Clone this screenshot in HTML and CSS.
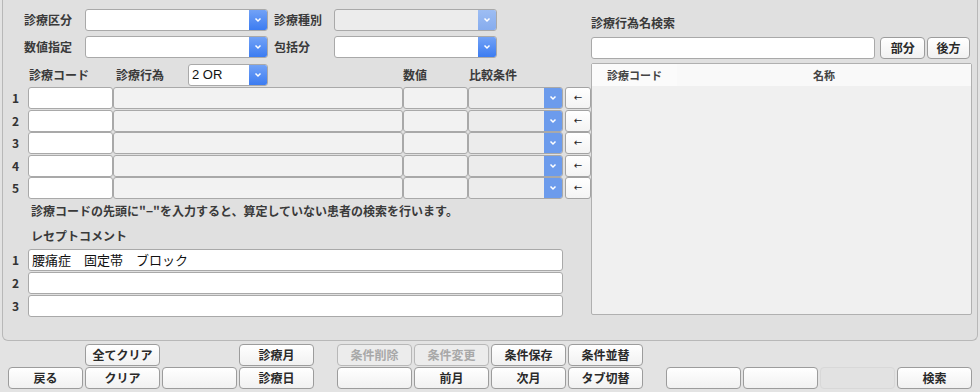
FILE: index.html
```html
<!DOCTYPE html>
<html lang="ja">
<head>
  <meta charset="UTF-8">
  <title>診療行為検索</title>
  <link rel="stylesheet" href="styles.css">
</head>
<body>
  <div class="panel">
    <div class="left">
      <div class="top-row">
        <label class="lbl lbl-a">診療区分</label>
        <div class="select sel-a"><span class="sel-text"></span><span class="sel-btn"><svg width="8" height="6" viewBox="0 0 8 6"><polyline points="1.5,1.5 4,4 6.5,1.5" fill="none" stroke="#fff" stroke-width="1.5"/></svg></span></div>
        <label class="lbl lbl-b">診療種別</label>
        <div class="select sel-b disabled"><span class="sel-text"></span><span class="sel-btn"><svg width="8" height="6" viewBox="0 0 8 6"><polyline points="1.5,1.5 4,4 6.5,1.5" fill="none" stroke="#fff" stroke-width="1.5"/></svg></span></div>
      </div>
      <div class="top-row">
        <label class="lbl lbl-a">数値指定</label>
        <div class="select sel-a"><span class="sel-text"></span><span class="sel-btn"><svg width="8" height="6" viewBox="0 0 8 6"><polyline points="1.5,1.5 4,4 6.5,1.5" fill="none" stroke="#fff" stroke-width="1.5"/></svg></span></div>
        <label class="lbl lbl-b">包括分</label>
        <div class="select sel-b"><span class="sel-text"></span><span class="sel-btn"><svg width="8" height="6" viewBox="0 0 8 6"><polyline points="1.5,1.5 4,4 6.5,1.5" fill="none" stroke="#fff" stroke-width="1.5"/></svg></span></div>
      </div>

      <div class="grid-head">
        <span></span>
        <span class="lbl head-code">診療コード</span>
        <div class="head-act">
          <span class="lbl">診療行為</span>
          <div class="select sel-or"><span class="sel-text">2 OR</span><span class="sel-btn"><svg width="8" height="6" viewBox="0 0 8 6"><polyline points="1.5,1.5 4,4 6.5,1.5" fill="none" stroke="#fff" stroke-width="1.5"/></svg></span></div>
        </div>
        <span class="lbl">数値</span>
        <span class="lbl">比較条件</span>
      </div>

      <div class="code-rows">
        <div class="code-row">
          <span class="num">1</span>
          <div class="field white"></div>
          <div class="field"></div>
          <div class="field"></div>
          <div class="select cmp"><span class="sel-text"></span><span class="sel-btn"><svg width="8" height="6" viewBox="0 0 8 6"><polyline points="1.5,1.5 4,4 6.5,1.5" fill="none" stroke="#fff" stroke-width="1.5"/></svg></span></div>
          <button class="arrow">←</button>
        </div>
        <div class="code-row">
          <span class="num">2</span>
          <div class="field white"></div>
          <div class="field"></div>
          <div class="field"></div>
          <div class="select cmp"><span class="sel-text"></span><span class="sel-btn"><svg width="8" height="6" viewBox="0 0 8 6"><polyline points="1.5,1.5 4,4 6.5,1.5" fill="none" stroke="#fff" stroke-width="1.5"/></svg></span></div>
          <button class="arrow">←</button>
        </div>
        <div class="code-row">
          <span class="num">3</span>
          <div class="field white"></div>
          <div class="field"></div>
          <div class="field"></div>
          <div class="select cmp"><span class="sel-text"></span><span class="sel-btn"><svg width="8" height="6" viewBox="0 0 8 6"><polyline points="1.5,1.5 4,4 6.5,1.5" fill="none" stroke="#fff" stroke-width="1.5"/></svg></span></div>
          <button class="arrow">←</button>
        </div>
        <div class="code-row">
          <span class="num">4</span>
          <div class="field white"></div>
          <div class="field"></div>
          <div class="field"></div>
          <div class="select cmp"><span class="sel-text"></span><span class="sel-btn"><svg width="8" height="6" viewBox="0 0 8 6"><polyline points="1.5,1.5 4,4 6.5,1.5" fill="none" stroke="#fff" stroke-width="1.5"/></svg></span></div>
          <button class="arrow">←</button>
        </div>
        <div class="code-row">
          <span class="num">5</span>
          <div class="field white"></div>
          <div class="field"></div>
          <div class="field"></div>
          <div class="select cmp"><span class="sel-text"></span><span class="sel-btn"><svg width="8" height="6" viewBox="0 0 8 6"><polyline points="1.5,1.5 4,4 6.5,1.5" fill="none" stroke="#fff" stroke-width="1.5"/></svg></span></div>
          <button class="arrow">←</button>
        </div>
      </div>

      <p class="note">診療コードの先頭に"−"を入力すると、算定していない患者の検索を行います。</p>

      <p class="lbl comment-title">レセプトコメント</p>
      <div class="comment-rows">
        <div class="comment-row"><span class="num">1</span><div class="field white comment">腰痛症　固定帯　ブロック</div></div>
        <div class="comment-row"><span class="num">2</span><div class="field white comment"></div></div>
        <div class="comment-row"><span class="num">3</span><div class="field white comment"></div></div>
      </div>
    </div>

    <div class="right">
      <p class="lbl">診療行為名検索</p>
      <div class="search-row">
        <div class="field white search-input"></div>
        <button class="btn small">部分</button>
        <button class="btn small">後方</button>
      </div>
      <div class="result">
        <div class="result-head">
          <span class="col-code">診療コード</span>
          <span class="col-name">名称</span>
        </div>
      </div>
    </div>
  </div>

  <div class="btn-bar">
    <div class="btn-group">
      <span class="btn-empty"></span>
      <button class="btn">全てクリア</button>
      <span class="btn-empty"></span>
      <button class="btn">診療月</button>
      <button class="btn">戻る</button>
      <button class="btn">クリア</button>
      <button class="btn"></button>
      <button class="btn">診療日</button>
    </div>
    <div class="btn-group">
      <button class="btn disabled">条件削除</button>
      <button class="btn disabled">条件変更</button>
      <button class="btn">条件保存</button>
      <button class="btn">条件並替</button>
      <button class="btn"></button>
      <button class="btn">前月</button>
      <button class="btn">次月</button>
      <button class="btn">タブ切替</button>
    </div>
    <div class="btn-group">
      <span class="btn-empty"></span>
      <span class="btn-empty"></span>
      <span class="btn-empty"></span>
      <span class="btn-empty"></span>
      <button class="btn"></button>
      <button class="btn"></button>
      <button class="btn flat"></button>
      <button class="btn">検索</button>
    </div>
  </div>
</body>
</html>
```

FILE: styles.css
```css
* {
  box-sizing: border-box;
  margin: 0;
  padding: 0;
}

body {
  font-family: "Noto Sans CJK JP", "Noto Sans", sans-serif;
  background-color: #e3e3e3;
  color: #333;
  font-size: 12px;
  width: 980px;
  height: 392px;
  overflow: hidden;
}

.panel {
  display: flex;
  margin-left: 2px;
  width: 976px;
  height: 341px;
  border: 1px solid #b8b8b8;
  border-top: none;
  border-radius: 0 0 6px 6px;
  background-color: #e0e0e0;
}

.lbl {
  font-size: 12px;
  font-weight: bold;
  color: #3a3a3a;
  line-height: 14px;
}

/* left column */
.left {
  width: 588px;
  padding-top: 9px;
}

.top-row {
  display: flex;
  align-items: center;
  height: 22px;
  margin-bottom: 5px;
}

.lbl-a {
  width: 82px;
  padding-left: 21px;
}

.lbl-b {
  width: 66px;
  padding-left: 6px;
}

.select {
  display: flex;
  height: 22px;
  border: 1px solid #a9a9a9;
  border-radius: 3px;
  background: #fff;
  overflow: hidden;
}

.sel-text {
  flex: 1;
  font-family: "Liberation Sans", "Noto Sans CJK JP", sans-serif;
  font-size: 13px;
  line-height: 20px;
  padding-left: 3px;
  color: #111;
}

.sel-btn {
  width: 18px;
  display: flex;
  align-items: center;
  justify-content: center;
  background: linear-gradient(#72a2f6, #3c7cf1);
}

.sel-a {
  width: 183px;
}

.sel-b {
  width: 163px;
}

.select.disabled {
  background: #ececec;
}

.select.disabled .sel-btn {
  background: linear-gradient(#9dbdf3, #86acee);
}

.grid-head {
  display: grid;
  grid-template-columns: 25px 85px 290px 66px 120px;
  align-items: center;
  height: 24px;
  margin-top: 4px;
}

.head-code {
  padding-left: 1px;
}

.head-act {
  display: flex;
  align-items: center;
}

.head-act .lbl {
  width: 75px;
  padding-left: 3px;
}

.sel-or {
  width: 80px;
}

.code-rows {
  display: grid;
  grid-auto-rows: 22.5px;
}

.code-row {
  display: grid;
  grid-template-columns: 25px 85px 290px 65px 95px 28px;
}

.code-row .arrow {
  margin-left: 2px;
  width: 26px;
}

.num {
  font-weight: bold;
  font-size: 12px;
  color: #333;
  padding-left: 9px;
  line-height: 22px;
}

.field {
  height: 22px;
  border: 1px solid #a9a9a9;
  border-radius: 3px;
  background: #f2f2f2;
}

.field.white {
  background: #fff;
}

.select.cmp {
  background: #ececec;
}

.select.cmp .sel-btn {
  background: #6c9bec;
}

.arrow {
  height: 22px;
  border: 1px solid #a3a3a3;
  border-radius: 3px;
  background: linear-gradient(#fff, #f3f3f3);
  font-size: 10px;
  color: #222;
  line-height: 18px;
  font-family: "DejaVu Sans", sans-serif;
}

.note {
  margin-top: 4px;
  padding-left: 28px;
  font-size: 12px;
  line-height: 14px;
  color: #3a3a3a;
  font-weight: bold;
}

.comment-title {
  margin-top: 11px;
  padding-left: 28px;
}

.comment-rows {
  display: grid;
  grid-auto-rows: 22px;
  row-gap: 1px;
  margin-top: 6px;
}

.comment-row {
  display: grid;
  grid-template-columns: 25px 535px;
}

.comment {
  font-size: 13px;
  line-height: 20px;
  padding-left: 3px;
  color: #111;
}

/* right column */
.right {
  width: 381px;
  padding-top: 16px;
}

.search-row {
  display: flex;
  margin-top: 7px;
  height: 22px;
}

.search-input {
  width: 286px;
  margin-right: 5px;
}

.btn.small {
  width: 45px;
  margin-right: 2px;
}

.btn.small + .btn.small {
  width: 43px;
}

.result {
  margin-top: 4px;
  height: 252px;
  border: 1px solid #b0b0b0;
  border-radius: 2px;
  background: #f0f0f0;
}

.result-head {
  display: flex;
  height: 22px;
  background: #f9f9f9;
  font-size: 11px;
  font-weight: bold;
  color: #444;
  line-height: 22px;
}

.col-code {
  width: 85px;
  text-align: center;
  background: #fbfbfb;
}

.col-name {
  flex: 1;
  text-align: center;
}

/* bottom buttons */
.btn {
  height: 22px;
  border: 1px solid #9c9c9c;
  border-radius: 4px;
  background: linear-gradient(#ffffff, #f1f1f1);
  font-family: "Noto Sans CJK JP", sans-serif;
  font-size: 12px;
  font-weight: bold;
  color: #2a2a2a;
  line-height: 20px;
}

.btn.disabled {
  color: #a8a8a8;
  border-color: #b8b8b8;
  background: #ececec;
}

.btn.flat {
  border-color: #d8d8d8;
  background: #e2e2e2;
}

.btn-bar {
  display: flex;
  gap: 23px;
  margin-top: 3px;
  margin-left: 8px;
}

.btn-group {
  display: grid;
  grid-template-columns: repeat(4, 75px);
  grid-auto-rows: 22px;
  column-gap: 2px;
  row-gap: 1px;
}
```
